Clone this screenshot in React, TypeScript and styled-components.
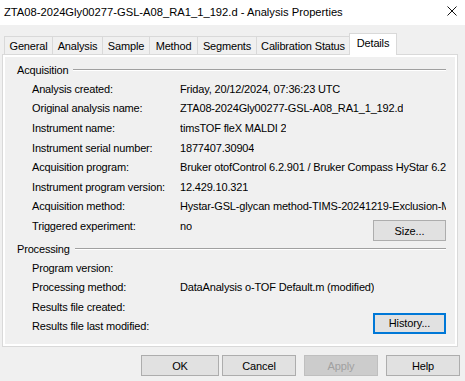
import React from "react";
import styled, { createGlobalStyle } from "styled-components";

const Global = createGlobalStyle`
  html, body { margin: 0; padding: 0; background: #f0f0f0; }
  * { box-sizing: border-box; }
`;

const Window = styled.div`
  width: 465px;
  height: 381px;
  background: #f0f0f0;
  font-family: "Liberation Sans", Arial, sans-serif;
  font-size: 11px;
  letter-spacing: -0.17px;
  color: #000;
  overflow: hidden;
  display: flex;
  flex-direction: column;
`;

const TitleBar = styled.div`
  height: 25px;
  background: #fff;
  display: flex;
  align-items: center;
  justify-content: space-between;
  padding: 0 8px 0 4px;
  flex-shrink: 0;
`;

const Title = styled.div`
  font-family: "Liberation Sans", Arial, sans-serif;
  font-size: 11.2px;
  letter-spacing: 0;
  color: #000;
  white-space: nowrap;
  margin-top: -2px;
`;

const CloseIcon = styled.svg`
  width: 10px;
  height: 10px;
  margin-top: -4px;
`;

const Body = styled.div`
  padding-left: 2px;
  display: flex;
  flex-direction: column;
`;

const TabRow = styled.div`
  margin-top: 8px;
  height: 21px;
  padding-left: 2px;
  display: flex;
  align-items: flex-end;
  position: relative;
  z-index: 1;
`;

const Tab = styled.div<{ $w: number; $active?: boolean }>`
  width: ${(p) => p.$w}px;
  height: ${(p) => (p.$active ? 22 : 18)}px;
  margin-right: -1px;
  margin-bottom: ${(p) => (p.$active ? -1 : 0)}px;
  border: 1px solid #d9d9d9;
  border-bottom: none;
  background: ${(p) => (p.$active ? "#fff" : "#f0f0f0")};
  display: flex;
  align-items: center;
  justify-content: center;
  padding-bottom: ${(p) => (p.$active ? 4 : 0)}px;
  white-space: nowrap;
  position: relative;
  z-index: ${(p) => (p.$active ? 2 : 1)};
`;

const Panel = styled.div`
  width: 456px;
  height: 293px;
  border: 1px solid #d9d9d9;
  background: #fff;
  padding: 2px;
`;

const PanelInner = styled.div`
  height: 100%;
  background: #f0f0f0;
  padding: 6px 9px 0 12px;
  display: flex;
  flex-direction: column;
`;

const GroupHeader = styled.div<{ $top: number }>`
  height: 14px;
  margin-top: ${(p) => p.$top}px;
  margin-bottom: 2px;
  display: flex;
  align-items: center;
`;

const GroupLabel = styled.span`
  white-space: nowrap;
`;

const GroupLine = styled.div`
  flex: 1;
  margin-left: 5px;
  height: 2px;
  border-top: 1px solid #a0a0a0;
  border-bottom: 1px solid #fff;
`;

const Rows = styled.div`
  display: grid;
  grid-template-columns: 148px 1fr;
  grid-auto-rows: 19.6px;
  padding-left: 15px;
`;

const Row = styled.div`
  display: contents;
`;

const Label = styled.div`
  display: flex;
  align-items: center;
  white-space: nowrap;
`;

const ValueCell = styled.div`
  display: flex;
  align-items: flex-start;
  justify-content: space-between;
  min-width: 0;
  position: relative;
`;

const Value = styled.div`
  height: 19.6px;
  display: flex;
  align-items: center;
  white-space: nowrap;
  overflow: hidden;
  min-width: 0;
`;

const Button = styled.button<{ $w: number; $focus?: boolean; $disabled?: boolean }>`
  width: ${(p) => p.$w}px;
  height: 21px;
  padding: 0;
  font-family: "Liberation Sans", Arial, sans-serif;
  font-size: 11px;
  letter-spacing: -0.1px;
  color: ${(p) => (p.$disabled ? "#a0a0a0" : "#000")};
  background: ${(p) => (p.$disabled ? "#cccccc" : "#e1e1e1")};
  border: ${(p) =>
    p.$focus ? "2px solid #0078d7" : p.$disabled ? "1px solid #bfbfbf" : "1px solid #adadad"};
  flex-shrink: 0;
`;

const InlineButton = styled(Button)<{ $dy: number }>`
  margin-top: ${(p) => p.$dy}px;
  margin-left: auto;
`;

const ButtonBar = styled.div`
  display: flex;
  justify-content: flex-end;
  padding-right: 5px;
  margin-top: 8px;
  gap: 8px;
`;

const OkButton = styled(Button)`
  margin-right: -5px;
`;

type Item = { label: string; value?: string; action?: { text: string; dy: number; focus?: boolean } };

const acquisition: Item[] = [
  { label: "Analysis created:", value: "Friday, 20/12/2024, 07:36:23 UTC" },
  { label: "Original analysis name:", value: "ZTA08-2024Gly00277-GSL-A08_RA1_1_192.d" },
  { label: "Instrument name:", value: "timsTOF fleX MALDI 2" },
  { label: "Instrument serial number:", value: "1877407.30904" },
  { label: "Acquisition program:", value: "Bruker otofControl 6.2.901 / Bruker Compass HyStar 6.2" },
  { label: "Instrument program version:", value: "12.429.10.321" },
  { label: "Acquisition method:", value: "Hystar-GSL-glycan method-TIMS-20241219-Exclusion-Method" },
  { label: "Triggered experiment:", value: "no", action: { text: "Size...", dy: 4 } },
];

const processing: Item[] = [
  { label: "Program version:" },
  { label: "Processing method:", value: "DataAnalysis o-TOF Default.m (modified)" },
  { label: "Results file created:" },
  { label: "Results file last modified:", action: { text: "History...", dy: -4, focus: true } },
];

const tabs: { name: string; w: number; active?: boolean }[] = [
  { name: "General", w: 49 },
  { name: "Analysis", w: 51 },
  { name: "Sample", w: 48 },
  { name: "Method", w: 49 },
  { name: "Segments", w: 60 },
  { name: "Calibration Status", w: 94 },
  { name: "Details", w: 48, active: true },
];

function Group({ title, items, top }: { title: string; items: Item[]; top: number }) {
  return (
    <>
      <GroupHeader $top={top}>
        <GroupLabel>{title}</GroupLabel>
        <GroupLine />
      </GroupHeader>
      <Rows>
        {items.map((it) => (
          <Row key={it.label}>
            <Label>{it.label}</Label>
            <ValueCell>
              <Value>{it.value ?? ""}</Value>
              {it.action && (
                <InlineButton $w={73} $dy={it.action.dy} $focus={it.action.focus}>
                  {it.action.text}
                </InlineButton>
              )}
            </ValueCell>
          </Row>
        ))}
      </Rows>
    </>
  );
}

export default function App() {
  return (
    <Window>
      <Global />
      <TitleBar>
        <Title>ZTA08-2024Gly00277-GSL-A08_RA1_1_192.d - Analysis Properties</Title>
        <CloseIcon viewBox="0 0 10 10">
          <path d="M0.5 0.5 L9.5 9.5 M9.5 0.5 L0.5 9.5" stroke="#111" strokeWidth="1" fill="none" />
        </CloseIcon>
      </TitleBar>
      <Body>
        <TabRow>
          {tabs.map((t) => (
            <Tab key={t.name} $w={t.w} $active={t.active}>
              {t.name}
            </Tab>
          ))}
        </TabRow>
        <Panel>
          <PanelInner>
            <Group title="Acquisition" items={acquisition} top={0} />
            <Group title="Processing" items={processing} top={6} />
          </PanelInner>
        </Panel>
        <ButtonBar>
          <OkButton $w={78}>OK</OkButton>
          <Button $w={74}>Cancel</Button>
          <Button $w={74} $disabled>Apply</Button>
          <Button $w={74}>Help</Button>
        </ButtonBar>
      </Body>
    </Window>
  );
}
